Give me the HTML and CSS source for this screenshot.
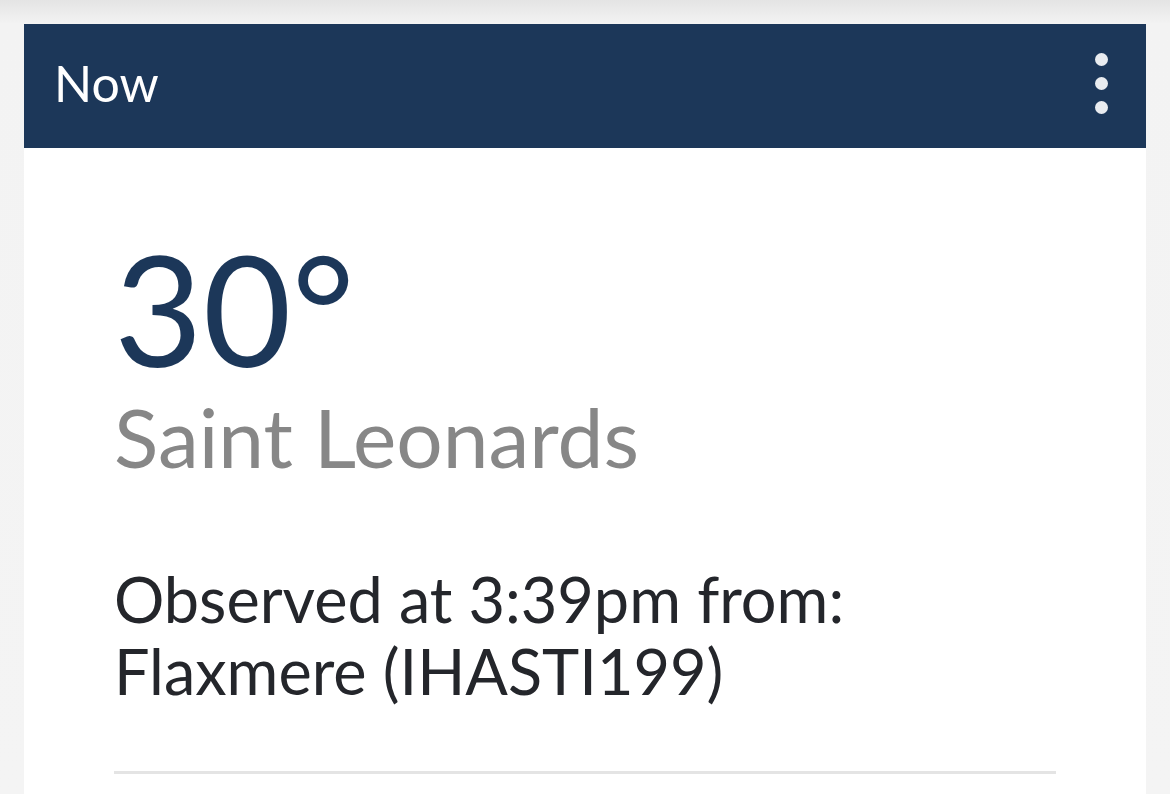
FILE: index.html
```html
<!DOCTYPE html>
<html>
<head>
<meta charset="utf-8">
<link rel="stylesheet" href="styles.css">
</head>
<body>
<div class="page">
  <div class="card">
    <div class="header">
      <div class="title">Now</div>
      <div class="menu" aria-label="More options">
        <span class="dot"></span><span class="dot"></span><span class="dot"></span>
      </div>
    </div>
    <div class="body">
      <div class="temp">30°</div>
      <div class="place">Saint Leonards</div>
      <div class="observed">Observed at 3:39pm from:<br>Flaxmere (IHASTI199)</div>
      <div class="divider"></div>
    </div>
  </div>
</div>
</body>
</html>
```
FILE: styles.css
```css
html, body {
  margin: 0;
  padding: 0;
}
body {
  background: linear-gradient(#e4e4e4 0px, #f3f3f3 24px, #f4f4f4 100%);
  font-family: Lato, "Noto Sans", sans-serif;
  height: 794px;
  overflow: hidden;
}
.page {
  padding: 24px 24px 0 24px;
}
.card {
  background: #ffffff;
  height: 770px;
}
.header {
  background: #1c3759;
  height: 124px;
  display: flex;
  align-items: center;
  justify-content: space-between;
  padding: 0 30px 0 30px;
  box-sizing: border-box;
}
.title {
  color: #ffffff;
  font-size: 50px;
  margin-bottom: 6px;
}
.menu {
  display: flex;
  flex-direction: column;
  gap: 11px;
  padding-right: 8px;
  margin-bottom: 5px;
}
.dot {
  width: 13px;
  height: 13px;
  border-radius: 50%;
  background: #e9ecf0;
}
.body {
  padding: 85px 90px 0 90px;
}
.temp {
  color: #1c3759;
  font-size: 153px;
  line-height: 150px;
}
.place {
  color: #878787;
  font-size: 82px;
  line-height: 100px;
  margin-top: 3px;
}
.observed {
  color: #24262b;
  font-size: 63px;
  line-height: 72px;
  margin-top: 77px;
}
.divider {
  height: 3px;
  background: #e4e4e4;
  margin-top: 64px;
}
```
